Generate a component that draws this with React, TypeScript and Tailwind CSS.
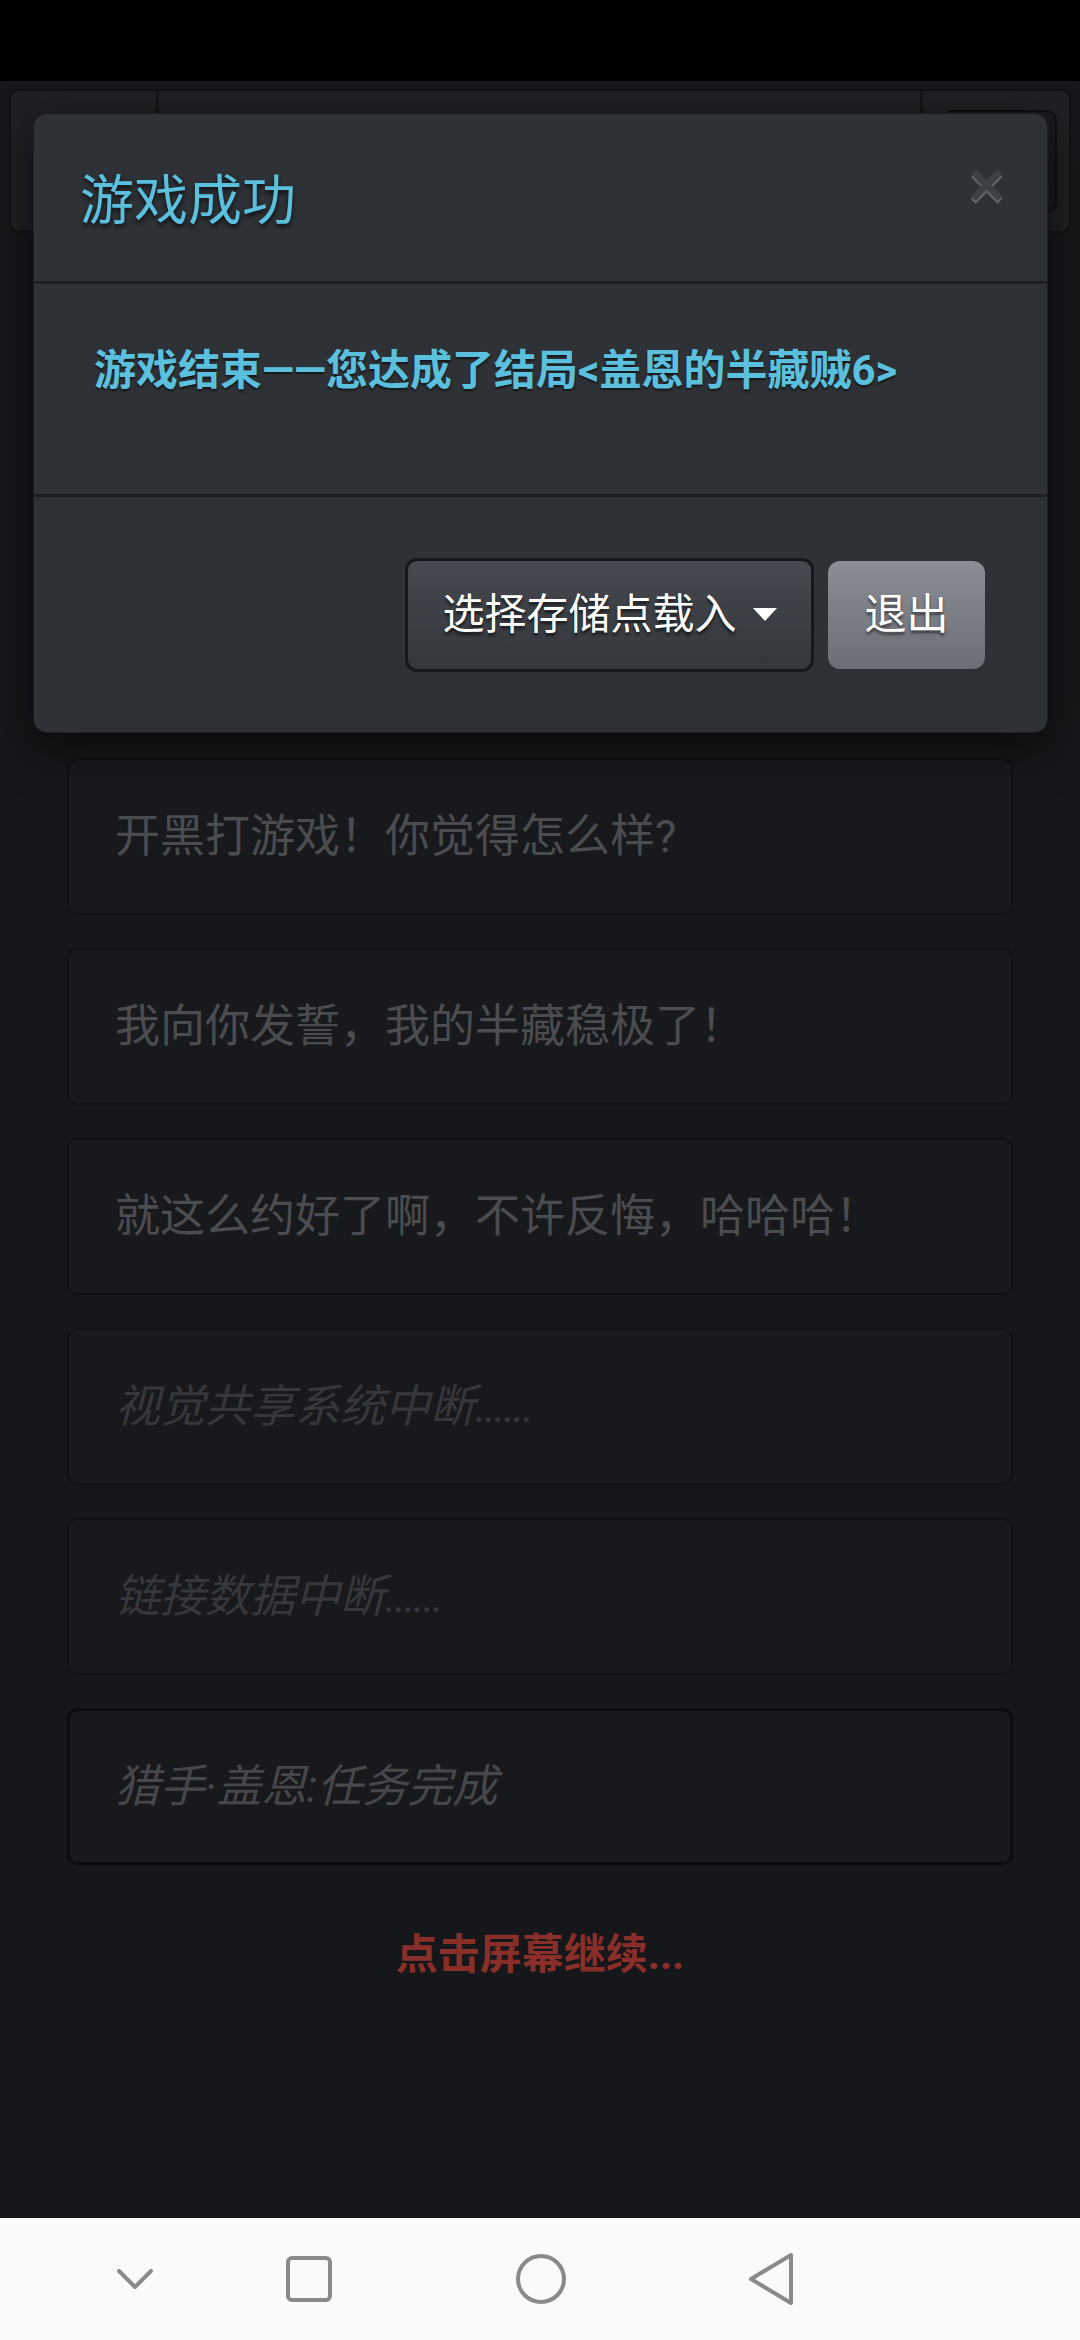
import React from 'react';

const cjk = { fontFamily: 'Roboto, "Noto Sans CJK SC", sans-serif' };

const lines: { text: string; dots?: string; faded?: boolean; last?: boolean }[] = [
    { text: '开黑打游戏！你觉得怎么样?' },
    { text: '我向你发誓，我的半藏稳极了！' },
    { text: '就这么约好了啊，不许反悔，哈哈哈！' },
    { text: '视觉共享系统中断', dots: '......', faded: true },
    { text: '链接数据中断', dots: '......', faded: true },
    { text: '猎手·盖恩:任务完成', faded: true, last: true },
];

const App = () => {
    return (
        <div
            className="relative w-[1080px] h-[2340px] overflow-hidden bg-[#16171a] flex flex-col"
            style={cjk}
        >
            {/* status bar */}
            <div className="h-[81px] bg-black shrink-0" />

            {/* page behind the dialog */}
            <div className="flex-1 flex flex-col bg-[#16171a]">
                {/* top toolbar */}
                <div className="mt-[8px] mx-[9px] h-[144px] rounded-[10px] border-2 border-[#101113] bg-[#1e2023] flex">
                    <div className="w-[148px] border-r-[3px] border-[#141517]" />
                    <div className="flex-1" />
                    <div className="w-[149px] border-l-[3px] border-[#141517] flex items-center justify-end pr-[12px]">
                        <div className="w-[115px] h-[103px] rounded-[10px] border-2 border-[#0f1012] bg-[#1a1b1e]" />
                    </div>
                </div>

                {/* story lines */}
                <div className="mt-[525px] px-[67px] flex flex-col gap-[33px]">
                    {lines.map((l) => (
                        <div
                            key={l.text}
                            className={
                                l.last
                                    ? 'h-[157px] rounded-[10px] border-[3px] border-[#0b0c0e] bg-[#18191d] flex items-center pl-[45px]'
                                    : 'h-[157px] rounded-[10px] border-2 border-[#101114] bg-[#18191d] flex items-center pl-[46px]'
                            }
                        >
                            <span
                                className={
                                    l.faded
                                        ? l.last
                                            ? 'text-[45px] italic text-[#45474b]'
                                            : 'text-[45px] italic text-[#35373b]'
                                        : 'text-[45px] text-[#4a4c50]'
                                }
                            >
                                {l.text}
                                {l.dots && <span className="tracking-[-2px]">{l.dots}</span>}
                            </span>
                        </div>
                    ))}
                </div>

                <div className="mt-[60px] text-center text-[42px] leading-[60px] font-bold text-[#8a2e29]">
                    点击屏幕继续...
                </div>
            </div>

            {/* android nav bar */}
            <div className="h-[122px] shrink-0 bg-[#fafafa] flex items-center pl-[117px]">
                <svg width="36" height="22" viewBox="0 0 36 22" className="mt-[2px]">
                    <polyline points="2,2 18,18 34,2" fill="none" stroke="#8a8a8a" strokeWidth="4" strokeLinecap="round" strokeLinejoin="round" />
                </svg>
                <svg width="46" height="46" viewBox="0 0 46 46" className="ml-[133px]">
                    <rect x="2" y="2" width="42" height="42" rx="4" fill="none" stroke="#8a8a8a" strokeWidth="4" />
                </svg>
                <svg width="52" height="52" viewBox="0 0 52 52" className="ml-[183px]">
                    <circle cx="26" cy="26" r="23" fill="none" stroke="#8a8a8a" strokeWidth="4" />
                </svg>
                <svg width="48" height="54" viewBox="0 0 48 54" className="ml-[180px]">
                    <path d="M44 3 L4 27 L44 51 Z" fill="none" stroke="#8a8a8a" strokeWidth="4" strokeLinejoin="round" />
                </svg>
            </div>

            {/* dialog */}
            <div className="absolute left-[33px] top-[113px] w-[1015px] h-[620px] rounded-[14px] border border-[#1c1e21] bg-[#2e3135] shadow-[0_15px_45px_rgba(0,0,0,0.6)] flex flex-col">
                <div className="h-[170px] shrink-0 border-b-[3px] border-[#1d1f22] flex items-center justify-between pl-[46px] pr-[42px]">
                    <h4
                        className="text-[54px] leading-none text-[#5bc0de] mt-[8px]"
                        style={{ textShadow: '0 3px 4px #101113' }}
                    >
                        游戏成功
                    </h4>
                    <span
                        className="text-[63px] leading-none font-bold text-[#3d4045] -mt-[26px]"
                        style={{ fontFamily: '"Liberation Sans", sans-serif', textShadow: '0 3px 0 #5f6266' }}
                    >
                        ×
                    </span>
                </div>

                <div className="h-[213px] shrink-0 border-b-[3px] border-[#1d1f22] pl-[60px] pt-[57px]">
                    <p
                        className="text-[42px] leading-[60px] font-bold text-[#5bc0de]"
                        style={{ textShadow: '0 2px 2px #16171a' }}
                    >
                        游戏结束——您达成了结局&lt;盖恩的半藏贼6&gt;
                    </p>
                </div>

                <div className="flex-1 flex items-center justify-end pr-[62px] gap-[14px]">
                    <button className="h-[114px] w-[409px] rounded-[12px] border-[3px] border-[#17181b] bg-gradient-to-b from-[#464a50] to-[#33363b] flex items-center justify-center gap-[16px] text-white text-[42px]">
                        <span style={{ textShadow: '0 3px 3px rgba(0,0,0,0.6)' }}>选择存储点载入</span>
                        <svg width="24" height="13" viewBox="0 0 24 13">
                            <path d="M0 0 L24 0 L12 13 Z" fill="#ffffff" />
                        </svg>
                    </button>
                    <button className="h-[108px] w-[157px] rounded-[12px] bg-gradient-to-b from-[#8b8e94] to-[#6b6f75] text-white text-[42px]">
                        <span style={{ textShadow: '0 3px 3px rgba(0,0,0,0.5)' }}>退出</span>
                    </button>
                </div>
            </div>
        </div>
    );
};

export default App;
